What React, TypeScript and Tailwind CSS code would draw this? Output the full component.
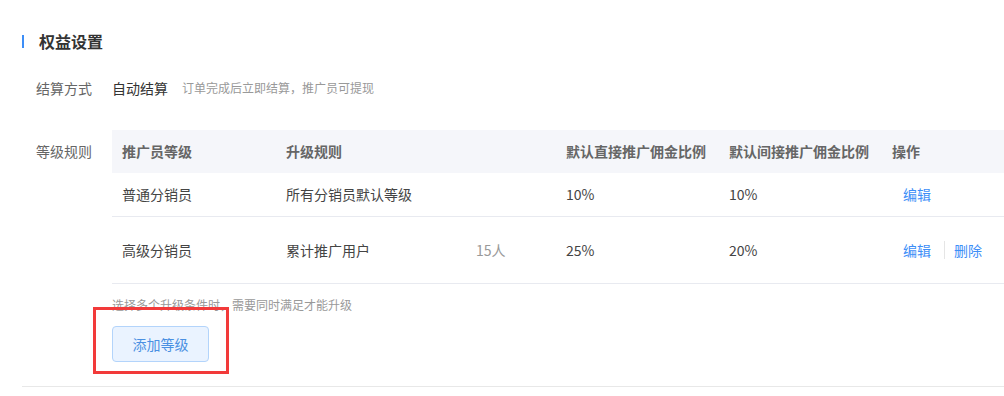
import React from "react";

const font = { fontFamily: '"Microsoft YaHei", "Noto Sans CJK SC", "Noto Sans", sans-serif' };

export default function App() {
  const rows = [
    { level: "普通分销员", rule: "所有分销员默认等级", extra: "", direct: "10%", indirect: "10%", del: false, h: "h-[44px]" },
    { level: "高级分销员", rule: "累计推广用户", extra: "15人", direct: "25%", indirect: "20%", del: true, h: "h-[67px]" },
  ];
  return (
    <div className="w-[1004px] h-[396px] bg-white overflow-hidden" style={font}>
      <div className="pt-[24px] pl-[22px]">
        <div className="flex items-center h-[34px]">
          <div className="w-[2px] h-[13px] bg-[#3d8ef7]" />
          <div className="ml-[15px] text-[16px] font-bold text-[#333]">权益设置</div>
        </div>
        <div className="flex items-center h-[32px] mt-[14px] text-[14px]">
          <div className="w-[90px] pl-[14px] text-[#666]">结算方式</div>
          <div className="text-[#333]">自动结算</div>
          <div className="ml-[14px] text-[12px] text-[#999]">订单完成后立即结算，推广员可提现</div>
        </div>
        <div className="flex mt-[26px] text-[14px]">
          <div className="w-[90px] pl-[14px] text-[#666] h-[43px] flex items-center">等级规则</div>
          <div className="flex-1">
            <div className="flex items-center h-[43px] bg-[#f5f6fa] font-bold text-[#666]">
              <div className="w-[164px] pl-[10px]">推广员等级</div>
              <div className="w-[280px] pl-[10px]">升级规则</div>
              <div className="w-[163px] pl-[10px]">默认直接推广佣金比例</div>
              <div className="w-[163px] pl-[10px]">默认间接推广佣金比例</div>
              <div className="pl-[10px]">操作</div>
            </div>
            {rows.map((r) => (
              <div key={r.level} className={`flex items-center ${r.h} border-b border-[#e8eaf0] text-[#444]`}>
                <div className="w-[164px] pl-[10px]">{r.level}</div>
                <div className="w-[280px] pl-[10px] flex">
                  <span className="w-[190px]">{r.rule}</span>
                  <span className="text-[#999]">{r.extra}</span>
                </div>
                <div className="w-[163px] pl-[10px]">{r.direct}</div>
                <div className="w-[163px] pl-[10px]">{r.indirect}</div>
                <div className="pl-[21px] flex items-center text-[#3d8ef7]">
                  <span>编辑</span>
                  {r.del && (
                    <>
                      <span className="ml-[13px] mr-[9px] w-px h-[18px] bg-[#e5e5e5]" />
                      <span>删除</span>
                    </>
                  )}
                </div>
              </div>
            ))}
            <div className="mt-[11px] h-[20px] flex items-center text-[12px] text-[#999]">
              选择多个升级条件时，需要同时满足才能升级
            </div>
            <div className="relative mt-[11px] w-[97px]">
              <button className="w-[97px] h-[36px] rounded-[4px] border border-[#b3d4fb] bg-[#eaf3ff] text-[14px] text-[#4a90e2]">
                添加等级
              </button>
              <div className="absolute left-[-19px] top-[-19px] w-[136px] h-[67px] border-[3px] border-[#f23a3a]" />
            </div>
          </div>
        </div>
        <div className="mt-[24px] border-t border-[#e8e8e8]" />
      </div>
    </div>
  );
}
